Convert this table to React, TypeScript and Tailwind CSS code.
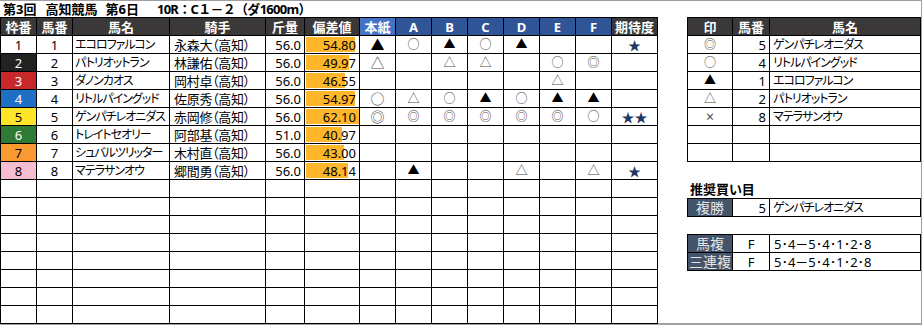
import React from "react";

type Row = {
  waku: number;
  num: number;
  name: string;
  jockey: string;
  kin: string;
  dev: string;
  bar: number;
  marks: string[];
  exp: string;
};

const rows: Row[] = [
  { waku: 1, num: 1, name: "エコロファルコン", jockey: "永森大（高知）", kin: "56.0", dev: "54.80", bar: 49, marks: ["▲", "○", "▲", "○", "▲", "", ""], exp: "★" },
  { waku: 2, num: 2, name: "パトリオットラン", jockey: "林謙佑（高知）", kin: "56.0", dev: "49.97", bar: 43, marks: ["△", "", "△", "△", "", "○", "◎"], exp: "" },
  { waku: 3, num: 3, name: "ダノンカオス", jockey: "岡村卓（高知）", kin: "56.0", dev: "46.55", bar: 39, marks: ["", "", "", "", "", "△", ""], exp: "" },
  { waku: 4, num: 4, name: "リトルパイングッド", jockey: "佐原秀（高知）", kin: "56.0", dev: "54.97", bar: 49, marks: ["○", "△", "○", "▲", "○", "▲", "▲"], exp: "" },
  { waku: 5, num: 5, name: "ゲンパチレオニダス", jockey: "赤岡修（高知）", kin: "56.0", dev: "62.10", bar: 53, marks: ["◎", "◎", "◎", "◎", "◎", "◎", "○"], exp: "★★" },
  { waku: 6, num: 6, name: "トレイトセオリー", jockey: "阿部基（高知）", kin: "51.0", dev: "40.97", bar: 36, marks: ["", "", "", "", "", "", ""], exp: "" },
  { waku: 7, num: 7, name: "シュバルツリッター", jockey: "木村直（高知）", kin: "56.0", dev: "43.00", bar: 38, marks: ["", "", "", "", "", "", ""], exp: "" },
  { waku: 8, num: 8, name: "マテラサンオウ", jockey: "郷間勇（高知）", kin: "56.0", dev: "48.14", bar: 42, marks: ["", "▲", "", "", "△", "", "△"], exp: "★" },
];

const wakuCls: Record<number, string> = {
  1: "bg-white text-black",
  2: "bg-[#222222] text-white",
  3: "bg-[#c9282a] text-white",
  4: "bg-[#1f6fc6] text-white",
  5: "bg-[#fde528] text-black",
  6: "bg-[#2f7a34] text-white",
  7: "bg-[#fb9a32] text-black",
  8: "bg-[#f6bcd0] text-black",
};

const cell = "border-r border-b border-black h-[18px] flex items-center overflow-hidden whitespace-nowrap";
const hd = "border-r border-b border-black h-[18px] flex items-center justify-center text-white font-bold text-[13px]";
const nameCls = "text-[12px] tracking-[-1px]";
const jockeyCls = "text-[13px] tracking-[-0.3px]";

function Mark({ m, big }: { m: string; big?: boolean }) {
  if (!m) return null;
  const color = m === "▲" ? "text-black" : "text-[#4a4a4a]";
  const size = m === "×" ? "text-[14px]" : big ? "text-[14px]" : "text-[12px]";
  return <span className={`${color} ${size} leading-[16px]`}>{m}</span>;
}

export default function App() {
  const empty = Array.from({ length: 8 });
  return (
    <div className="w-[922px] h-[325px] bg-white border-t border-r border-b-2 border-[#a0a0a0] flex flex-col text-black font-['Noto_Sans','Noto_Sans_CJK_JP',sans-serif] [font-feature-settings:'palt'] text-[13px] leading-[16px]">
      <div className="h-[16px] pl-[3px] flex items-center font-bold text-[13px] whitespace-nowrap [font-feature-settings:normal]">
        <span>第3回</span>
        <span className="ml-[9px]">高知競馬</span>
        <span className="ml-[8px]">第6日</span>
        <span className="ml-[18px] tracking-[-0.7px]">10R：C１－２（ダ1600m）</span>
      </div>
      <div className="flex">
        {/* main table */}
        <div className="grid grid-cols-[36px_36px_97px_96px_39px_55px_36px_36px_36px_36px_36px_36px_36px_46px] border-l border-t border-black">
          <div className={`${hd} bg-[#3a3838]`}>枠番</div>
          <div className={`${hd} bg-[#3a3838]`}>馬番</div>
          <div className={`${hd} bg-[#3a3838]`}>馬名</div>
          <div className={`${hd} bg-[#3a3838]`}>騎手</div>
          <div className={`${hd} bg-[#3a3838]`}>斤量</div>
          <div className={`${hd} bg-[#3a3838]`}>偏差値</div>
          <div className={`${hd} bg-[#4472c4]`}>本紙</div>
          <div className={`${hd} bg-[#2f5597]`}>A</div>
          <div className={`${hd} bg-[#2f5597]`}>B</div>
          <div className={`${hd} bg-[#2f5597]`}>C</div>
          <div className={`${hd} bg-[#2f5597]`}>D</div>
          <div className={`${hd} bg-[#2f5597]`}>E</div>
          <div className={`${hd} bg-[#2f5597]`}>F</div>
          <div className={`${hd} bg-[#3a3838]`}>期待度</div>
          {rows.map((r) => (
            <React.Fragment key={r.num}>
              <div className={`${cell} justify-center ${wakuCls[r.waku]}`}>{r.waku}</div>
              <div className={`${cell} justify-center`}>{r.num}</div>
              <div className={`${cell} pl-[2px] ${nameCls}`}>{r.name}</div>
              <div className={`${cell} pl-[4px] ${jockeyCls}`}>{r.jockey}</div>
              <div className={`${cell} justify-end pr-[3px]`}>{r.kin}</div>
              <div className={`${cell} relative justify-end pr-[3px]`}>
                <div className="absolute left-[1px] top-[1px] bottom-[1px] bg-[#ffb62b]" style={{ width: r.bar }} />
                <span className="relative">{r.dev}</span>
              </div>
              {r.marks.map((m, i) => (
                <div key={i} className={`${cell} justify-center`}>
                  <Mark m={m} big={i === 0} />
                </div>
              ))}
              <div className={`${cell} justify-center text-[#1f3864] text-[13px]`}>{r.exp}</div>
            </React.Fragment>
          ))}
          {empty.map((_, k) => (
            <React.Fragment key={`e${k}`}>
              {Array.from({ length: 14 }).map((__, j) => (
                <div key={j} className={cell} />
              ))}
            </React.Fragment>
          ))}
        </div>

        {/* right panel */}
        <div className="ml-[29px] flex flex-col">
          <div className="grid grid-cols-[45px_37px_151px] border-l border-t border-black">
            <div className={`${hd} bg-[#3a3838]`}>印</div>
            <div className={`${hd} bg-[#3a3838]`}>馬番</div>
            <div className={`${hd} bg-[#3a3838]`}>馬名</div>
            {[
              ["◎", "5", "ゲンパチレオニダス"],
              ["○", "4", "リトルパイングッド"],
              ["▲", "1", "エコロファルコン"],
              ["△", "2", "パトリオットラン"],
              ["×", "8", "マテラサンオウ"],
              ["", "", ""],
              ["", "", ""],
            ].map((r, i) => (
              <React.Fragment key={i}>
                <div className={`${cell} justify-center`}>
                  <Mark m={r[0]} />
                </div>
                <div className={`${cell} justify-end pr-[3px]`}>{r[1]}</div>
                <div className={`${cell} pl-[3px] ${nameCls}`}>{r[2]}</div>
              </React.Fragment>
            ))}
          </div>
          <div className="mt-[19px] h-[16px] pl-[3px] flex items-center font-bold text-[13px]">推奨買い目</div>
          <div className="mt-[1px] grid grid-cols-[45px_37px_151px] border-l border-t border-black">
            <div className="border-r border-b border-black h-[18px] flex items-center justify-center bg-[#44546a] text-[#e6e6e6] text-[14px]">複勝</div>
            <div className={`${cell} justify-end pr-[3px]`}>5</div>
            <div className={`${cell} pl-[3px] ${nameCls}`}>ゲンパチレオニダス</div>
          </div>
          <div className="mt-[17px] grid grid-cols-[45px_37px_151px] border-l border-t border-black">
            <div className="border-r border-b border-black h-[18px] flex items-center justify-center bg-[#44546a] text-[#e6e6e6] text-[14px]">馬複</div>
            <div className={`${cell} justify-center`}>F</div>
            <div className={`${cell} pl-[4px]`}>5･4－5･4･1･2･8</div>
            <div className="border-r border-b border-black h-[18px] flex items-center justify-center bg-[#44546a] text-[#e6e6e6] text-[14px]">三連複</div>
            <div className={`${cell} justify-center`}>F</div>
            <div className={`${cell} pl-[4px]`}>5･4－5･4･1･2･8</div>
          </div>
        </div>
      </div>
    </div>
  );
}
